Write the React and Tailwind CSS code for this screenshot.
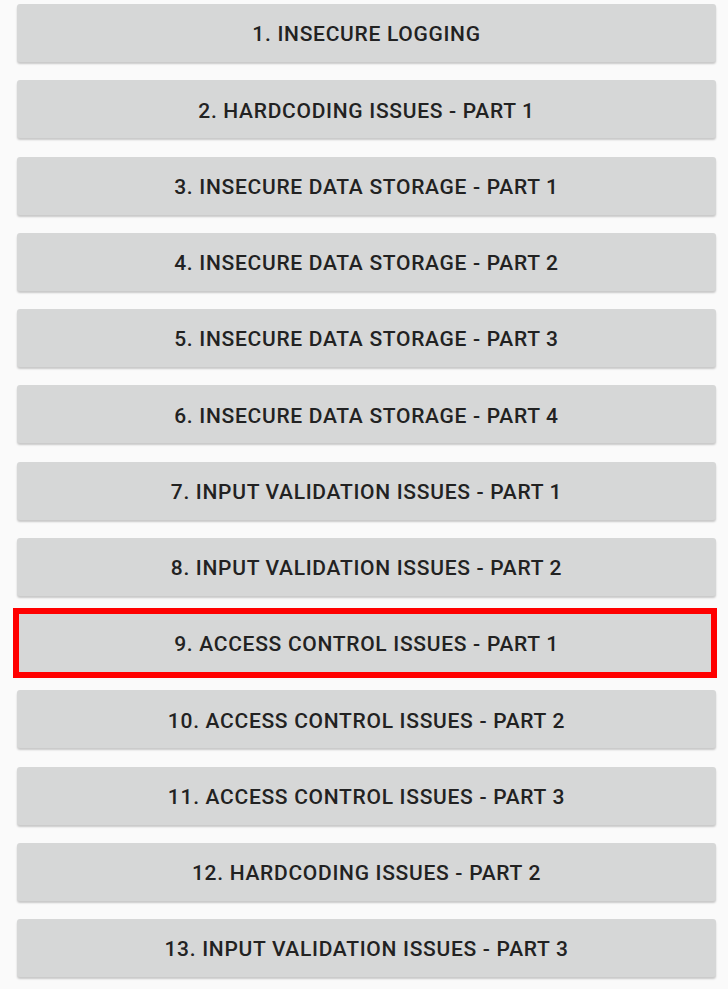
import React from "react";

const ITEMS = [
  "1. INSECURE LOGGING",
  "2. HARDCODING ISSUES - PART 1",
  "3. INSECURE DATA STORAGE - PART 1",
  "4. INSECURE DATA STORAGE - PART 2",
  "5. INSECURE DATA STORAGE - PART 3",
  "6. INSECURE DATA STORAGE - PART 4",
  "7. INPUT VALIDATION ISSUES - PART 1",
  "8. INPUT VALIDATION ISSUES - PART 2",
  "9. ACCESS CONTROL ISSUES - PART 1",
  "10. ACCESS CONTROL ISSUES - PART 2",
  "11. ACCESS CONTROL ISSUES - PART 3",
  "12. HARDCODING ISSUES - PART 2",
  "13. INPUT VALIDATION ISSUES - PART 3",
];

const HIGHLIGHT = 8;

export default function App() {
  return (
    <div className="w-[728px] h-[989px] overflow-hidden bg-[#fafafa] pt-[4px] pl-[17px] pr-[12px] font-['Roboto',sans-serif]">
      <div className="flex flex-col gap-[18.25px]">
        {ITEMS.map((label, i) => (
          <div key={label} className="relative">
            <button className="w-full h-[58px] pt-[4px] rounded-[3px] bg-[#d6d7d7] shadow-[0_2px_2px_rgba(0,0,0,0.2)] text-[21px] font-medium text-[#222222] tracking-[0.7px]">
              {label}
            </button>
            {i === HIGHLIGHT && (
              <div className="absolute -left-[4.5px] -right-[0.5px] -top-[6.5px] -bottom-[6px] border-[6px] border-[#ff0000] pointer-events-none" />
            )}
          </div>
        ))}
      </div>
    </div>
  );
}
